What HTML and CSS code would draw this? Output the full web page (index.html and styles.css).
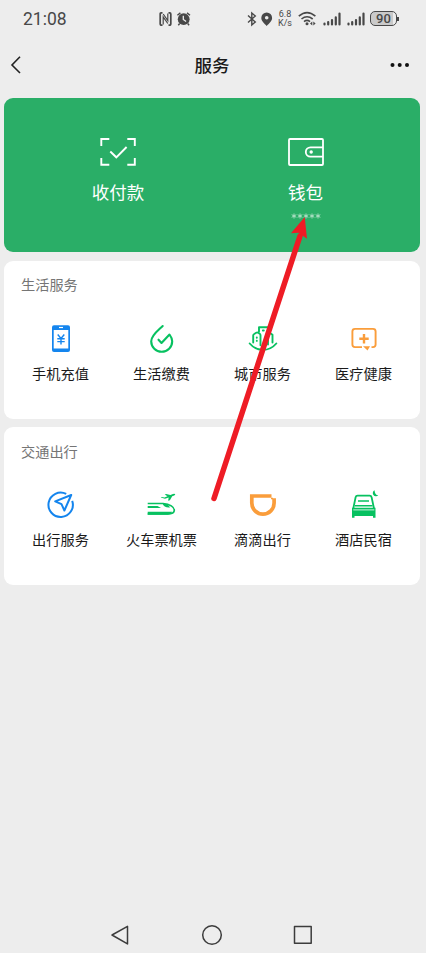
FILE: index.html
```
<!DOCTYPE html>
<html lang="zh-CN">
<head>
<meta charset="utf-8">
<title>服务</title>
<link rel="stylesheet" href="styles.css">
</head>
<body>
<div class="screen">
  <div class="status">
    <span class="clock">21:08</span>
    <svg class="status-left" width="32" height="14" viewBox="0 0 32 14">
      <path d="M3.500 .9H2.200Q1.200.9 1.200 2v10q0 1.200 1 1.200h1.300M9.500 .9h1.300q1 0 1 1.200v10q0 1.100-1 1.100H9.500" fill="none" stroke="#484848" stroke-width="1.700"/>
      <path d="M4.200 12.500V5l4.600 6.500M8.800 1.500v7L4.200 2" fill="none" stroke="#484848" stroke-width="1.200"/>
      <circle cx="24.700" cy="7.200" r="5.900" fill="#484848"/>
      <path d="M18.400 3.200l3-2.300M31 3.200l-3-2.300M20.700 11.500l-1.400 1.800M28.700 11.500l1.400 1.800" stroke="#484848" stroke-width="1.400"/>
      <path d="M24.300 3.800v3.700l2.800 2" fill="none" stroke="#ededed" stroke-width="1.300"/>
    </svg>
    <div class="status-right">
      <svg width="26" height="16" viewBox="0 0 26 16">
        <path d="M1 4.500l7.300 6.500L4.800 14V2l3.500 3L1 11.500" fill="none" stroke="#484848" stroke-width="1.400"/>
        <path d="M19.700 1.500a5.400 5.400 0 0 1 5.400 5.400c0 3.200-3.200 5.400-5.400 8.100-2.200-2.700-5.400-4.900-5.400-8.100a5.400 5.400 0 0 1 5.400-5.400z" fill="#484848"/>
        <circle cx="19.700" cy="6.700" r="1.800" fill="#ededed"/>
      </svg>
      <span class="speed"><span>6.8</span><span>K/s</span></span>
      <svg class="wifi" width="19" height="15" viewBox="0 0 19 15" fill="none" stroke="#484848" stroke-width="1.600">
        <path d="M.8 5.200Q9-2 17.400 5.200M3.500 8Q9 3.500 14.700 8M6 10.600Q9 8.200 12 10.600"/>
        <circle cx="9" cy="12.700" r="1.500" fill="#484848" stroke="none"/>
        <path d="M14.300 10.500v4l-2.300-2zM15.300 10.500v4l2.300-2z" fill="#484848" stroke="none"/>
      </svg>
      <svg class="signal" width="18" height="14" viewBox="0 0 18 14" stroke="#484848" stroke-width="2.200" stroke-linecap="round">
        <path d="M1.500 11.500v1M5.200 10v2.500M9 8v4.500M12.800 5.300v7.200M16.500 1.500v11"/>
      </svg>
      <svg class="signal" width="18" height="14" viewBox="0 0 18 14" stroke="#484848" stroke-width="2.200" stroke-linecap="round">
        <path d="M1.500 11.500v1M5.200 10v2.500M9 8v4.500M12.800 5.300v7.200M16.500 1.500v11"/>
      </svg>
      <span class="battery">90</span><i class="battery-cap"></i>
    </div>
  </div>

  <header class="nav">
    <svg width="12" height="20" viewBox="0 0 12 20"><path d="M10 1.800L2 10l8 8" fill="none" stroke="#222" stroke-width="1.600"/></svg>
    <h1>服务</h1>
    <svg width="20" height="20" viewBox="0 0 20 20" fill="#111"><circle cx="2.500" cy="10" r="2"/><circle cx="9.700" cy="10" r="2"/><circle cx="17" cy="10" r="2"/></svg>
  </header>

  <main>
    <section class="pay">
      <div class="pay-item">
        <svg width="36" height="28" viewBox="0 0 36 28" fill="none" stroke="#fff" stroke-width="1.900">
          <path d="M1.300 8V1h8M27.300 1h7.500v7M1.300 20v6.700h8M27.300 26.700h7.500V20M10.300 13.500l6 5.800L26.600 9"/>
        </svg>
        <span>收付款</span>
      </div>
      <div class="pay-item wallet">
        <svg width="36" height="28" viewBox="0 0 36 28" fill="none" stroke="#fff" stroke-width="1.800">
          <rect x="1" y="1" width="34" height="26" rx="1"/>
          <path d="M35 9.300H22.500a4.700 4.700 0 0 0 0 9.400H35"/>
          <circle cx="23.200" cy="14" r="1.700" fill="#fff" stroke="none"/>
        </svg>
        <span>钱包</span>
        <svg class="mask" width="30" height="6" viewBox="0 0 30 6" stroke="#fff" stroke-width=".9">
          <path id="star" d="M3 .5v5M.7 1.700l4.600 2.600M.7 4.300l4.600-2.600"/>
          <use href="#star" x="6"/><use href="#star" x="12"/><use href="#star" x="18"/><use href="#star" x="24"/>
        </svg>
      </div>
    </section>

    <section class="card">
      <h2>生活服务</h2>
      <div class="grid">
        <div class="item">
          <svg class="icon" viewBox="0 0 36 36">
            <rect x="9" y="4.300" width="18" height="26.700" rx="2" fill="#1485ee"/>
            <path d="M10.700 9h14.600v18.500H10.700z" fill="#fff"/>
            <path d="M16 6.500h4" stroke="#fff" stroke-width="1.200"/>
            <path d="M14.700 13.500L18 17.500l3.300-4M18 17.500V23.500M14.300 17.800h7.400M14.300 20.600h7.400" fill="none" stroke="#1485ee" stroke-width="1.400"/>
          </svg>
          <span>手机充值</span>
        </div>
        <div class="item">
          <svg class="icon" viewBox="0 0 36 36" fill="none" stroke="#07c160" stroke-width="2.100" stroke-linejoin="round" stroke-linecap="round">
            <path d="M18.700 5C14 9.500 7.200 14.500 7.200 20.300a10.500 10.500 0 0 0 21 0c0-2.500-1-4.500-2.700-6.800L17.500 22l-3-3.300"/>
          </svg>
          <span>生活缴费</span>
        </div>
        <div class="item">
          <svg class="icon" viewBox="0 0 36 36" fill="none" stroke="#07c160" stroke-width="1.900" stroke-linecap="round" stroke-linejoin="round">
            <path d="M4.700 22.500C12 31 24 31 31.300 22.500M8.200 21.500v-7q0-1 1-1.500l2-1.200q1-.6 2 0l1.500 1q.8.600.8 1.500v10M14 10.500V6.200h9v17.300M23 12h2l2.500 1.700v7.800"/>
            <path d="M17.800 9.500h1M11.800 16.500v.2M11.800 19.700v.2"/>
          </svg>
          <span>城市服务</span>
        </div>
        <div class="item">
          <svg class="icon" viewBox="0 0 36 36" fill="none" stroke="#fa9d3b" stroke-width="1.900">
            <path d="M16 26.100H9q-2.600 0-2.600-2.500V10.400q0-2.500 2.600-2.500h18q2.600 0 2.600 2.500v13.200q0 2.500-2.600 2.500h-1.500"/>
            <path d="M18 13v9.400M13.300 17.700h9.400" stroke-width="2.400"/>
            <path d="M17 25.200h7L21.500 29.500z" fill="#fa9d3b" stroke="none"/>
          </svg>
          <span>医疗健康</span>
        </div>
      </div>
    </section>

    <section class="card travel">
      <h2>交通出行</h2>
      <div class="grid">
        <div class="item">
          <svg class="icon" viewBox="0 0 36 36" fill="none" stroke="#1485ee" stroke-width="2">
            <path d="M23.200 6.900A12.200 12.200 0 1 0 29.200 13.800"/>
            <path d="M28.200 8L12.200 14.400l6.300 2.800 2.900 6.300z" stroke-linejoin="round"/>
          </svg>
          <span>出行服务</span>
        </div>
        <div class="item">
          <svg class="icon" viewBox="0 0 36 36" fill="none">
            <path d="M3.700 16.500H19C26 17 30.300 20 30.300 23.300c0 2.800-3 3.700-7 3.700H3.700" stroke="#07c160" stroke-width="1.700"/>
            <path d="M3.700 24.800h24.500q-1.500 3-4.500 3H3.700zM3.700 19h9.800l3.500 2.100H3.700zM18.500 16.500l4 .5q3 1.500 3.500 3.500-6 .5-7.500-4z" fill="#07c160"/>
            <path d="M16.700 10.500l1-.6 2.800.6 3-1.200-2.800-1.800 1.500-.5 4.200 1.100 2.500-1q2-.6 2.300.2t-3 2l-2.300 4-1.800.4.600-3.200-3.700 1.300z" fill="#07c160"/>
          </svg>
          <span>火车票机票</span>
        </div>
        <div class="item">
          <svg class="icon" viewBox="0 0 36 36" fill="none" stroke="#fa9d3b" stroke-width="3.700">
            <path d="M26.500 9H6.800v7a11.150 11.150 0 0 0 22.300 0v-4.800"/>
            <path d="M26 11.500h2" stroke-width="1.500"/>
          </svg>
          <span>滴滴出行</span>
        </div>
        <div class="item">
          <svg class="icon" viewBox="0 0 36 36" fill="none">
            <path d="M7.300 21.500l2.300-11.300q.4-1.500 2-1.500h12q1.600 0 2 1.500L28 21.500" stroke="#07c160" stroke-width="1.800"/>
            <path d="M12 14h11M9 18.800h17.500" stroke="#07c160" stroke-width="1.500"/>
            <path d="M6 20.700h23.500v10H27v-1.700H8.500v1.700H6z" fill="#07c160"/>
            <path d="M7.300 22.900h21" stroke="#fff" stroke-width=".8"/>
            <path d="M28.600 3.200a3.200 3.200 0 1 0 3.700 5.100q-3.800-.4-3.700-5.100z" fill="#07c160"/>
          </svg>
          <span>酒店民宿</span>
        </div>
      </div>
    </section>
  </main>

  <footer class="system-nav">
    <svg width="20" height="22" viewBox="0 0 20 22"><path d="M17.500 2.300v17.600L2 11z"/></svg>
    <svg width="22" height="22" viewBox="0 0 22 22"><circle cx="11" cy="11" r="9.300"/></svg>
    <svg width="20" height="20" viewBox="0 0 20 20"><rect x="1.500" y="1.500" width="16.700" height="16.700"/></svg>
  </footer>

  <svg class="pointer" width="100" height="290" viewBox="0 0 100 290">
    <path d="M4 283.500L90 21" stroke="#ee1c25" stroke-width="5.500" stroke-linecap="round"/>
    <path d="M94.700 2L81 18.200l7.500-.5 8.500 6z" fill="#ee1c25"/>
  </svg>
</div>
</body>
</html>
```

FILE: styles.css
```
* { box-sizing: border-box; }
body {
  margin: 0;
  background: #ededed;
  font-family: Roboto, "Noto Sans CJK SC", sans-serif;
  color: #1a1a1a;
}
svg { display: block; flex: none; }
.screen {
  position: relative;
  display: flex;
  flex-direction: column;
  width: 426px;
  height: 953px;
  overflow: hidden;
}
.status {
  display: flex;
  align-items: center;
  height: 37px;
  padding: 0 27px 0 23px;
  color: #484848;
}
.clock { width: 136px; font-size: 17.5px; line-height: 20px; }
.status-right { display: flex; align-items: center; margin-left: auto; }
.speed {
  display: flex;
  flex-direction: column;
  align-items: center;
  width: 16px;
  margin-left: 4px;
  font-size: 9px;
  line-height: 8.5px;
}
.wifi { margin-left: 5px; }
.signal { margin-left: 6px; }
.battery {
  width: 27px;
  height: 15px;
  margin-left: 5px;
  border: 1.5px solid #484848;
  border-radius: 5px;
  background: linear-gradient(90deg, #cacaca 90%, #ededed 90%);
  font-size: 13px;
  font-weight: 500;
  line-height: 13.5px;
  text-align: center;
}
.battery-cap { width: 2px; height: 4px; background: #484848; }
.nav {
  display: flex;
  align-items: center;
  justify-content: space-between;
  height: 56px;
  padding: 0 16px 0 10px;
}
.nav h1 { margin: 1px 0 0 12px; font-size: 17.5px; font-weight: 500; line-height: 26px; }
main { display: flex; flex-direction: column; gap: 9px; padding: 4.5px 6px 0 4px; }
.pay {
  display: grid;
  grid-template-columns: 1fr 1fr;
  height: 154.5px;
  padding: 40px 20px 0;
  border-radius: 9px;
  background: #2aae67;
  color: #fff;
}
.pay-item { display: flex; flex-direction: column; align-items: center; font-size: 17.5px; line-height: 26px; }
.pay-item span { margin-top: 14px; }
.wallet { padding-right: 1px; }
.mask { margin-top: 7px; opacity: .65; }
.card { height: 157.5px; padding: 13px 6px 0; border-radius: 9px; background: #fff; }
.card h2 { margin: 0 0 0 11px; font-size: 14.2px; font-weight: 400; line-height: 22px; color: #757575; }
.grid { display: grid; grid-template-columns: repeat(4, 1fr); margin-top: 25px; }
.travel { margin-top: -.5px; padding-top: 14px; }
.travel .grid { margin-top: 23.5px; }
.item { display: flex; flex-direction: column; align-items: center; font-size: 14.2px; line-height: 22px; white-space: nowrap; }
.item span { margin-top: 6px; }
.icon { width: 36px; height: 36px; }
.system-nav {
  display: flex;
  align-items: center;
  justify-content: space-between;
  height: 36px;
  margin-top: auto;
  padding: 0 113px 0 110px;
}
.system-nav path, .system-nav circle, .system-nav rect {
  fill: none;
  stroke: #3c3c3c;
  stroke-width: 1.5;
  stroke-linejoin: round;
}
.pointer { position: absolute; left: 210px; top: 215px; }
```
